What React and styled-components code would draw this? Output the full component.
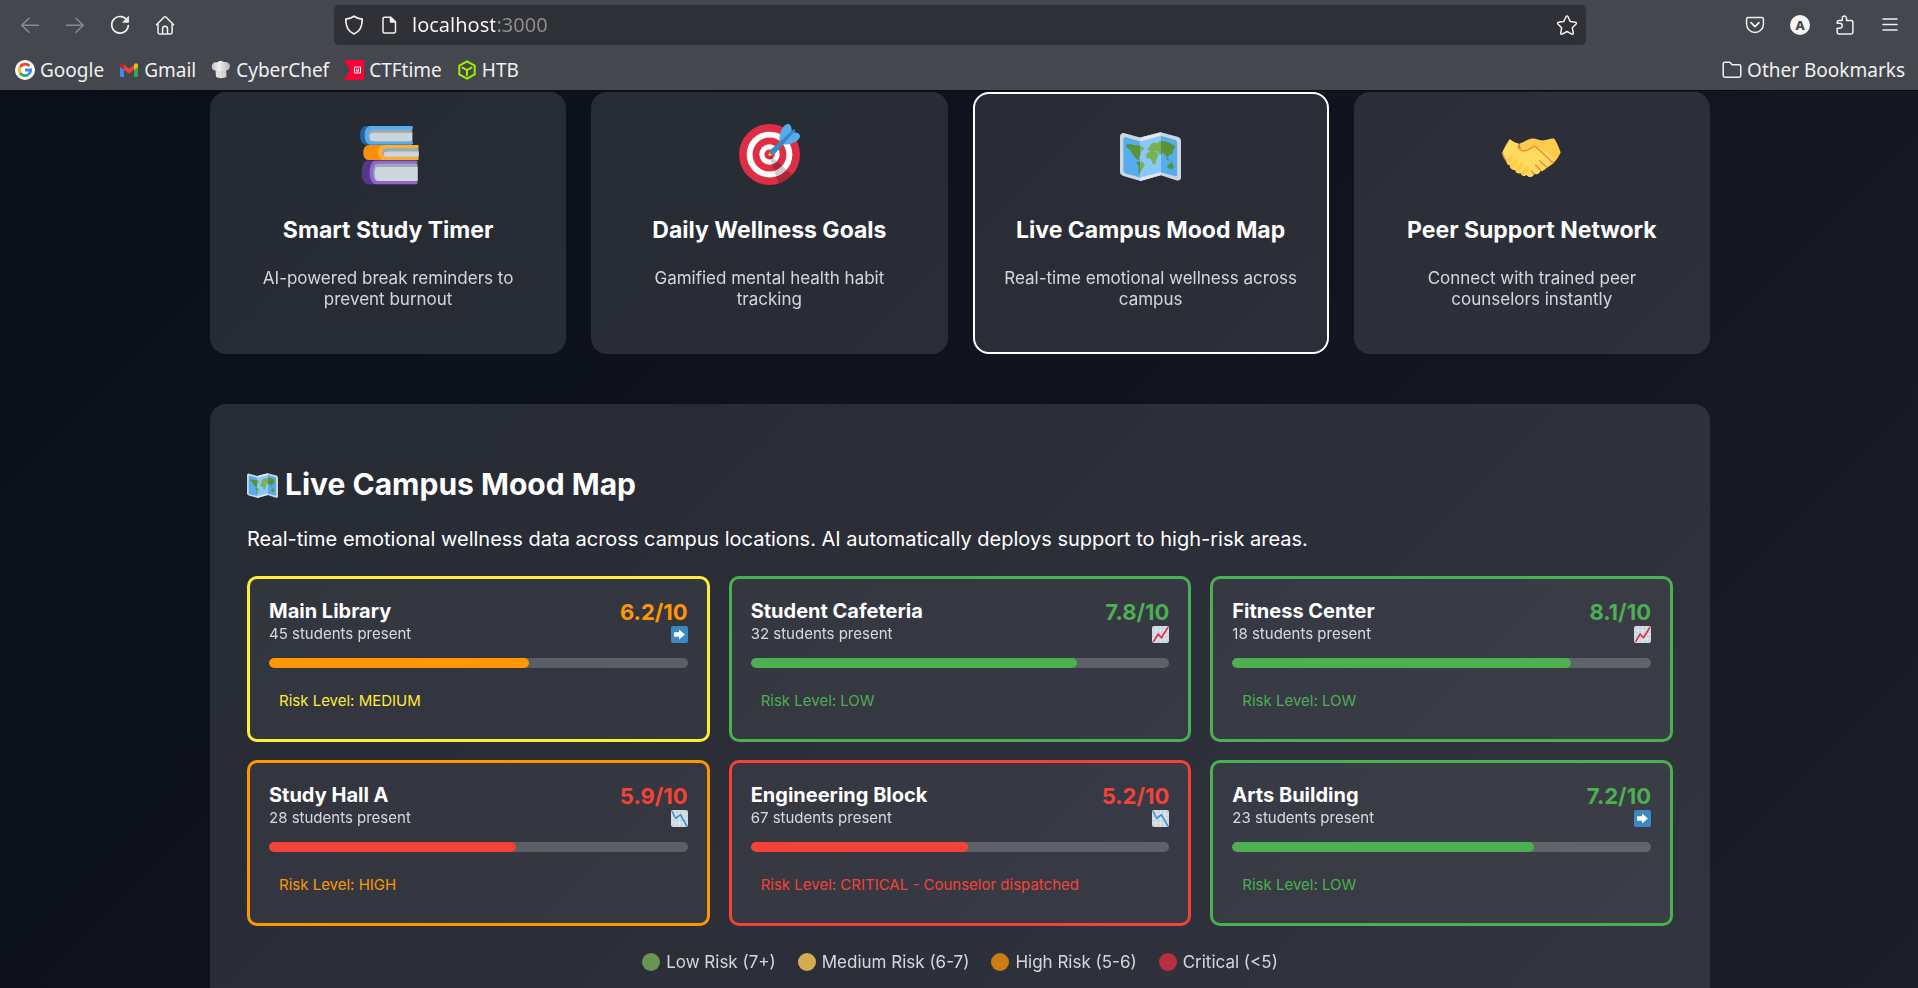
import React, { useState } from "react";
import styled, { createGlobalStyle } from "styled-components";

const GlobalStyle = createGlobalStyle`
  * { box-sizing: border-box; }
  body { margin: 0; background: #0b0e18; }
  button, input { font: inherit; color: inherit; }
`;

const Shell = styled.div`
  height: 100vh;
  display: flex;
  flex-direction: column;
  font-family: Inter, "Liberation Sans", sans-serif;
  color: #fff;
`;

/* ---------- browser chrome ---------- */

const Chrome = styled.header`
  flex: none;
  background: #45474e;
  border-bottom: 1px solid #0b0c10;
  color: #f0f0f0;
  font-family: "Noto Sans", sans-serif;
`;

const Toolbar = styled.div`
  display: flex;
  align-items: center;
  height: 50px;
  padding: 0 18px;
`;

const NavTools = styled.div`
  display: flex;
  align-items: center;
  gap: 21px;
`;

const MenuTools = styled.div`
  display: flex;
  align-items: center;
  gap: 25px;
`;

const ToolButton = styled.button`
  display: flex;
  padding: 0;
  border: 0;
  background: none;
  opacity: ${(p) => (p.disabled ? 0.4 : 1)};
`;

const UrlBar = styled.div`
  flex: 1;
  display: flex;
  align-items: center;
  height: 40px;
  margin: 0 159px 0 157px;
  padding: 0 8px;
  border-radius: 5px;
  background: #303136;
`;

const PageIcon = styled.span`
  display: flex;
  margin: 0 14px;
`;

const UrlInput = styled.input`
  flex: 1;
  min-width: 0;
  padding: 0;
  border: 0;
  outline: 0;
  font-size: 20px;
  line-height: 28px;
  color: transparent;
  caret-color: #fff;
  background: linear-gradient(to right, #fbfbfe 83px, #8d8e92 83px);
  background-clip: text;
  -webkit-background-clip: text;
`;

const Bookmarks = styled.nav`
  display: flex;
  align-items: center;
  gap: 15px;
  height: 40px;
  padding: 0 13px 0 15px;
`;

const Bookmark = styled.a`
  display: flex;
  align-items: center;
  gap: 5px;
  margin-left: ${(p) => (p.$end ? "auto" : "0")};
  color: inherit;
  text-decoration: none;
  font-size: 19px;
  line-height: 26px;
  white-space: nowrap;
`;

const Icon = ({ size = 20, box = 20, children, ...rest }) => (
  <svg width={size} height={size} viewBox={`0 0 ${box} ${box}`} fill="none" stroke="currentColor"
    strokeWidth="1.5" strokeLinecap="round" strokeLinejoin="round" aria-hidden="true" {...rest}>
    {children}
  </svg>
);

const BackIcon = () => <Icon size={24} box={24}><path d="M20.500 12.200H4M11 5.200l-7.200 7 7.200 7" /></Icon>;
const ForwardIcon = () => <Icon size={24} box={24}><path d="M3.500 12.200H20M13 5.200l7.200 7-7.200 7" /></Icon>;
const ReloadIcon = () => (
  <Icon size={24} box={24}>
    <path d="M19.400 8A8.300 8.300 0 1 0 20.300 12.600" strokeWidth="1.700" />
    <path d="M20.600 3.700v5.600H15z" fill="currentColor" strokeWidth=".8" />
  </Icon>
);
const HomeIcon = () => (
  <Icon size={24} box={24}>
    <path d="M3.500 11.800 11.200 4a1.200 1.200 0 0 1 1.700 0l7.700 7.800M5 10.800v8.400a1.800 1.800 0 0 0 1.800 1.800h10.500a1.800 1.800 0 0 0 1.800-1.800v-8.400M9.600 20.800v-5a2.400 2.400 0 0 1 4.900 0v5" />
  </Icon>
);
const ShieldIcon = () => (
  <Icon size={24} box={24}>
    <path d="M12 3.200c2.400 1.700 5 2.500 8.200 2.900.2 6.500-1.400 12-8.200 14.900-6.800-2.900-8.400-8.400-8.200-14.900C7 5.700 9.600 4.900 12 3.200z" strokeWidth="1.700" />
  </Icon>
);
const FileIcon = () => (
  <Icon size={18} box={18}>
    <path d="M4.500 1.200h6.300l4.700 4.700v9.600a1.500 1.500 0 0 1-1.500 1.500H4.500A1.500 1.500 0 0 1 3 15.500V2.700a1.500 1.500 0 0 1 1.500-1.500z" />
    <path d="M10.500 1.500V6h4.700z" fill="currentColor" />
  </Icon>
);
const StarIcon = () => (
  <Icon size={22} box={22}>
    <path d="M11 1.900c.4 0 .7.200.9.600l2.400 5.100 5.200.7c.9.100 1.200 1.100.6 1.700l-3.800 3.700 1 5.300c.1.900-.7 1.500-1.500 1.100L11 17.500l-4.800 2.600c-.8.400-1.600-.2-1.500-1.100l1-5.300L1.900 10c-.6-.6-.3-1.600.6-1.700l5.200-.7 2.400-5.100c.2-.4.500-.6.900-.6z" />
  </Icon>
);
const PocketIcon = () => (
  <Icon>
    <path d="M3 2.500h14c.8 0 1.400.6 1.400 1.400v5.400c0 4.500-3.800 8.200-8.400 8.200s-8.400-3.700-8.400-8.200V3.900c0-.8.600-1.400 1.400-1.400z" />
    <path d="M6 7.600l4 4 4-4" strokeWidth="1.700" />
  </Icon>
);
const AccountBadge = styled.span`
  display: grid;
  place-items: center;
  width: 20px;
  height: 20px;
  border-radius: 50%;
  background: #f4f4f5;
  color: #45474e;
  font-size: 13px;
  line-height: 20px;
  font-weight: 800;
`;
const PuzzleIcon = () => (
  <Icon>
    <path d="M2.200 8.300V7.100c0-1 .7-1.700 1.700-1.700h3.400V3.200a2 2 0 0 1 4.200 0v2.200h4.700c1 0 1.700.7 1.700 1.700v10.200c0 1-.7 1.700-1.700 1.700H3.900c-1 0-1.700-.7-1.700-1.700v-4.100h2.600a2.400 2.400 0 0 0 0-4.900H2.200z" />
  </Icon>
);
const MenuIcon = () => <Icon><path d="M3 4h14M3 9.500h14M3 15h14" /></Icon>;
const FolderIcon = () => (
  <Icon><path d="M2.800 2.200h4.500c.5 0 .9.200 1.200.6l1.600 1.900h7.100c1 0 1.600.7 1.600 1.600v9.200c0 1-.7 1.700-1.600 1.700H2.800c-1 0-1.600-.7-1.600-1.700V3.900c0-1 .6-1.700 1.600-1.700z" /></Icon>
);

const GoogleLogo = () => (
  <svg width="20" height="20" viewBox="0 0 20 20" aria-hidden="true">
    <circle cx="10" cy="10" r="10" fill="#fff" />
    <g fill="none" strokeWidth="2.800">
      <path d="M14.300 6A5.700 5.700 0 0 0 5.200 7" stroke="#ea4335" />
      <path d="M5.200 7a5.700 5.700 0 0 0 0 6" stroke="#fbbc05" />
      <path d="M5.200 13a5.700 5.700 0 0 0 8.500 1.300" stroke="#34a853" />
      <path d="M13.700 14.300a5.700 5.700 0 0 0 2-4.300H10" stroke="#4285f4" />
    </g>
  </svg>
);
const GmailLogo = () => (
  <svg width="20" height="20" viewBox="0 0 20 20" aria-hidden="true">
    <path d="M1 5v10.800c0 .7.500 1.200 1.200 1.200H5V8z" fill="#4285f4" />
    <path d="M19 5v10.800c0 .7-.5 1.200-1.200 1.200H15V8z" fill="#34a853" />
    <path d="M5 4.800l5 3.900 5-3.900v5L10 13.700 5 9.800z" fill="#ea4335" />
    <path d="M1 5.400C1 3.300 3.200 2.700 4.400 3.800L5 4.800v5L1 6.900z" fill="#c5221f" />
    <path d="M19 5.400c0-2.100-2.200-2.700-3.400-1.600l-.6 1v5l4-2.900z" fill="#fbbc04" />
  </svg>
);
const ChefLogo = () => (
  <svg width="20" height="20" viewBox="0 0 20 20" aria-hidden="true">
    <defs>
      <linearGradient id="chef" x1="0" x2="1">
        <stop offset="0" stopColor="#c4c4c4" /><stop offset=".4" stopColor="#f1f1f1" /><stop offset="1" stopColor="#b5b5b5" />
      </linearGradient>
    </defs>
    <path d="M4.500 10.500C1.500 10.600.3 7.600 1 5c.6-2.300 3.200-3.400 5-2.500C7.500.6 11.500.5 13 2.200c2.500-.9 5.200.4 5.800 3 .6 2.700-1 5-3.600 5.300L15.500 17c-3 1.500-7.500 1.500-10.500 0z" fill="url(#chef)" />
    <path d="M8 11v6M11 11v6" stroke="#bdbdbd" strokeWidth=".8" />
  </svg>
);
const CtfLogo = () => (
  <svg width="20" height="20" viewBox="0 0 20 20" aria-hidden="true">
    <path d="M0 0h20v20H0l6-10z" fill="#ff0033" />
    <path d="M10.500 7h6v6h-6zM12.700 8.800v2.400h1.800V8.500" fill="none" stroke="#fff" strokeWidth="1" />
  </svg>
);
const HtbLogo = () => (
  <svg width="20" height="20" viewBox="0 0 20 20" aria-hidden="true">
    <path d="M10 1.300l7.700 4.300v8.800L10 18.700l-7.700-4.300V5.600zM5.500 7.600l4.500 2.600 4.500-2.600M10 10.200v5" fill="none" stroke="#9fef00" strokeWidth="2" strokeLinejoin="round" strokeLinecap="round" />
  </svg>
);

/* ---------- emoji drawings ---------- */

const Emoji = ({ size, label, children }) => (
  <svg width={size} height={size} viewBox="0 0 36 36" role="img" aria-label={label}>{children}</svg>
);

const Books = ({ size }) => (
  <Emoji size={size} label="books">
    <path d="M8 1.200H4.600C2.500 1.200 1.200 3.600 1.200 6.700s1.300 5.500 3.400 5.500H8z" fill="#226699" />
    <path d="M31.500 1.200H7.400C5.200 1.200 3.900 3.600 3.900 6.700s1.300 5.500 3.500 5.500h24.100a1 1 0 0 0 0-2V3.200a1 1 0 0 0 0-2z" fill="#55acee" />
    <path d="M32 3.200H8.800C7.300 3.200 6.200 4.300 6.200 6.700s1.100 3.500 2.600 3.500H32z" fill="#9aaab4" />
    <path d="M32 5.200H8.800C7.600 5.200 6.800 6 6.800 7.700s.8 2.500 2 2.500H32z" fill="#ccd6dd" />
    <path d="M15 12.400H6.500c-2.100 0-3.400 1.800-3.400 4.500s1.300 4.400 3.400 4.400H15z" fill="#f4900c" />
    <path d="M35.200 12.400H15.500c-2.100 0-3.700 1.800-3.700 4.500s1.600 4.400 3.700 4.400h19.700a1 1 0 0 0 0-1.900v-5.100a1 1 0 0 0 0-1.900z" fill="#ffac33" />
    <path d="M35.800 14.300H17c-1.500 0-2.700.9-2.700 2.600s1.200 2.500 2.700 2.500h18.800z" fill="#9aaab4" />
    <path d="M35.800 16.300H17.200c-1.300 0-2 .5-2 1.600s.7 1.500 2 1.500h18.600z" fill="#ccd6dd" />
    <path d="M10 21.500H5.700c-2.100 0-3.500 3-3.500 7s1.400 7 3.500 7H10z" fill="#553788" />
    <path d="M34.500 21.500h-24c-2.100 0-3.700 3-3.700 7s1.600 7 3.700 7h24a1 1 0 0 0 0-1.900V23.400a1 1 0 0 0 0-1.900z" fill="#9266cc" />
    <path d="M35.200 23.400H11.700c-1.700 0-2.700 1.600-2.700 5.100s1 5.100 2.700 5.100h23.500z" fill="#9aaab4" />
    <path d="M35.200 25.400H11.900c-1.300 0-2 1-2 4.100s.7 4.100 2 4.100h23.300z" fill="#ccd6dd" />
  </Emoji>
);

const Target = ({ size }) => (
  <Emoji size={size} label="target">
    <circle fill="#DD2E44" cx="18" cy="18" r="18" />
    <circle fill="#FFF" cx="18" cy="18" r="13.5" />
    <circle fill="#DD2E44" cx="18" cy="18" r="10" />
    <circle fill="#FFF" cx="18" cy="18" r="6" />
    <circle fill="#DD2E44" cx="18" cy="18" r="3" />
    <path opacity=".2" d="M18.240 18.282l13.144 11.754s-2.647 3.376-7.890 5.109L17.579 18.420l.661-.138z" />
    <path fill="#FFAC33" d="M18.294 19c-.255 0-.509-.097-.704-.292-.389-.389-.389-1.018 0-1.407l.563-.563c.389-.389 1.018-.389 1.408 0 .388.389.388 1.018 0 1.407l-.564.563c-.194.195-.448.292-.703.292z" />
    <path fill="#55ACEE" d="M24.016 6.981c-.403 2.079 0 4.691 0 4.691l7.054-7.388c.291-1.454-.528-3.932-1.718-4.238-1.190-.306-4.079.803-5.336 6.935zm5.003 5.003c-2.079.403-4.691 0-4.691 0l7.388-7.054c1.454-.291 3.932.528 4.238 1.718.306 1.190-.803 4.079-6.935 5.336z" />
    <path fill="#3A87C2" d="M32.798 4.485L21.176 17.587c-.362.362-1.673.882-2.510.046-.836-.836-.419-2.080-.057-2.443L31.815 3.501s.676-.635 1.159-.152-.176 1.136-.176 1.136z" />
  </Emoji>
);

const WorldMap = ({ size }) => (
  <Emoji size={size} label="map">
    <path d="M0 7.300C0 5.800 1.300 5 2.700 5.400L12 8l12-3.200 10 2.700c1.300.4 2 1.300 2 2.500v21.600c0 1.400-1 2-2.400 1.700L24 30.300l-12 3.300-10-2.900c-1.300-.4-2-1.300-2-2.500z" fill="#ccd6dd" />
    <path d="M12 8l12-3.200v25.500l-12 3.300z" fill="#e1e8ed" />
    <path d="M2 9c0-.9.700-1.400 1.500-1.200L12 10.300v21.300L3.400 29.200C2.500 28.900 2 28.400 2 27.500zM24 7l8.400 2.300c.8.200 1.300.7 1.300 1.600v18.900c0 .9-.6 1.200-1.300 1L24 28.500z" fill="#55acee" />
    <path d="M12 10.300L24 7v21.500l-12 3.100z" fill="#88c9f9" />
    <path d="M3.600 12.200l2.600-.4 2.500.8 3.300.2v5.900l-1 .8 1 2.200-2.400-1.200L7.400 18 6 15.200l-2.200-1.300zM10.200 22.300l1.800-.2V29l-1.200-.5.300-3.600-1.300-1.500z" fill="#5c913b" />
    <path d="M12 12.800l1.500.6.700 1.400-1.500 1.200-.7 1.900zM12 22.100l1.700.4 1 1.800-1.600 2.200L12 29zM15.800 17.300l2.500-1.300 3.400.5 1.100 2-1.200 2-.8 3.200h-1.400L18.200 20.500l-2.200-.3-.8-1.200zM16.500 14.800l1.800-3 2-1 1 .7L24 9.800v8.400l-1.700-1.600-1.500-.8-1.800.6-2.200-.5z" fill="#77b255" />
    <path d="M24 9.800l4.600 1 3.900 2.200-.4 1.600-1 1 .2 1.600-2 .9-1.200 2-1.500-2-1.400-1.500-1.200 1.600zM27.500 20l1.300 1-.3.800-1.300-1zM29.500 21.800l1.500.5-.7.600zM28 24.200l2.500-1.500 1.300 2.400-.9 1.900-3-1.300z" fill="#5c913b" />
  </Emoji>
);

const Handshake = ({ size }) => (
  <Emoji size={size} label="handshake">
    <path d="M11 11.500c2.800-.8 5.300-3 8-2.900 2 .1 3.500 1.200 5.600 1.100 2.300-.1 4.500-1.400 6.700-1.100 1.500 1.900 3 5.500 3.900 8.100-.9 2.500-2.500 4.800-4.600 6.700L24 28 12 19z" fill="#ffcb4c" />
    <path d="M5.300 8.900C3.800 10.800 1.800 14.300.8 17c.5 1.800 1.300 3.400 2.500 4.900-.2 1.500.7 2.600 2.200 2.500-.2 1.700 1.100 3 2.900 2.700.1 1.600 1.600 2.500 3.200 2 .4 1.600 2.200 2 3.500 1 1.200 1.800 4 1.600 4.400-.7 1.700.8 3.600-.1 3.700-1.900 1.900.3 3.200-.9 3-2.500 1.900 0 3-1.300 2.600-2.800 2 .2 2.900-1.400 1.700-2.900L20.100 12.500c-2.100.4-3.100 2.700-5.900 3-2.600.2-4-1.300-3.100-3.700-2-.4-4-1.200-5.800-2.900z" fill="#ffdc5d" />
    <path d="M10.600 12.200c-1 2.300.8 4 3.600 3.600 2.700-.4 3.800-2.400 5.900-2.700l10.600 9.700M9.100 22.600l-3.400 2M12.200 24.700l-3.500 2.600M15.300 26.700l-3 2.600M18.200 27.800l1.200 1.600M20.500 24.400l3 3M22.800 21.700l3.600 3.300" fill="none" stroke="#ef9645" strokeWidth="1" strokeLinecap="round" strokeLinejoin="round" />
    <path d="M.8 17c.5 1.800 1.300 3.400 2.500 4.900" fill="none" stroke="#ef9645" strokeWidth=".8" />
    <g stroke="#ffcb4c" strokeWidth="2.600" strokeLinecap="round">
      <path d="M6 19.800l-1.500 2.100M9.200 21.800l-2.700 3.200M12.300 24l-2.500 3M15.200 26.200l-1.800 2.300" />
    </g>
  </Emoji>
);

const ArrowRight = ({ size }) => (
  <Emoji size={size} label="stable">
    <rect width="36" height="36" rx="4" fill="#3b88c3" />
    <path d="M29.500 18L17 7.500V13H6.500v10H17v5.500z" fill="#fff" />
  </Emoji>
);

const ChartBase = ({ size, label, color, line }) => (
  <Emoji size={size} label={label}>
    <rect width="36" height="36" rx="4" fill="#ccd6dd" />
    <path d="M0 9h36M0 18h36M0 27h36M9 0v36M18 0v36M27 0v36" stroke="#e1e8ed" strokeWidth="2" />
    <path d={line} fill="none" stroke={color} strokeWidth="3.500" strokeLinecap="round" strokeLinejoin="round" />
  </Emoji>
);
const ChartUp = ({ size }) => <ChartBase size={size} label="rising" color="#dd2e44" line="M4 32l9-15 7 8L33 4" />;
const ChartDown = ({ size }) => <ChartBase size={size} label="falling" color="#3b94d9" line="M3 4l7 14 10-8 13 23" />;

/* ---------- page ---------- */

const Page = styled.main`
  flex: 1;
  min-height: 0;
  overflow-y: auto;
  scrollbar-width: none;
  padding: 1px 0 0 2px;
  background: linear-gradient(135deg, #0a0f1a 0%, #11141f 50%, #1b1d29 100%);
`;

const Container = styled.div`
  width: 100%;
  max-width: 1500px;
  margin: 0 auto;
`;

const Features = styled.div`
  display: grid;
  grid-template-columns: repeat(4, 1fr);
  gap: 25px;
`;

const FeatureCard = styled.button`
  display: flex;
  flex-direction: column;
  align-items: center;
  padding: 30px 28px 42px;
  border: 2px solid ${(p) => (p.$active ? "#fff" : "transparent")};
  border-radius: 16px;
  background: rgba(255, 255, 255, 0.11) border-box;
  text-align: center;
  cursor: pointer;
`;

const FeatureTitle = styled.span`
  margin: 31px 0 24px;
  font-size: 23px;
  line-height: 28px;
  font-weight: 700;
`;

const FeatureText = styled.span`
  font-size: 17px;
  line-height: 21px;
  opacity: 0.8;
`;

const Panel = styled.section`
  margin-top: 50px;
  padding: 38px 37px;
  border-radius: 16px;
  background: rgba(255, 255, 255, 0.11);
`;

const PanelTitle = styled.h2`
  display: flex;
  align-items: center;
  gap: 7px;
  margin: 24px 0 25px;
  font-size: 30px;
  line-height: 36px;
`;

const PanelText = styled.p`
  margin: 0 0 25px;
  font-size: 20px;
  line-height: 24px;
`;

const Locations = styled.div`
  display: grid;
  grid-template-columns: repeat(3, 1fr);
  gap: 18px 19px;
`;

const LocationCard = styled.article`
  padding: 19px;
  border: 3px solid ${(p) => p.$color};
  border-radius: 10px;
  background: rgba(255, 255, 255, 0.05);
`;

const LocationHead = styled.div`
  display: flex;
  align-items: flex-start;
  justify-content: space-between;
  margin-bottom: 11px;
`;

const LocationName = styled.h3`
  margin: 0;
  font-size: 20px;
  line-height: 27px;
`;

const Present = styled.div`
  font-size: 15px;
  line-height: 18px;
  opacity: 0.8;
`;

const ScoreColumn = styled.div`
  display: flex;
  flex-direction: column;
  align-items: flex-end;
`;

const Score = styled.div`
  font-size: 22px;
  line-height: 28px;
  font-weight: 700;
  color: ${(p) => p.$color};
`;

const Trend = styled.div`
  display: flex;
  height: 21px;
`;

const Track = styled.div`
  height: 10px;
  border-radius: 5px;
  background: rgba(255, 255, 255, 0.2);
  overflow: hidden;
`;

const Fill = styled.div`
  height: 100%;
  border-radius: 5px;
  background: ${(p) => p.$color};
`;

const Risk = styled.div`
  margin-top: 14px;
  padding: 10px;
  font-size: 15px;
  line-height: 18px;
  color: ${(p) => p.$color};
`;

const Legend = styled.ul`
  display: flex;
  justify-content: center;
  gap: 22px;
  margin: 25px 0 0;
  padding: 0;
  list-style: none;
  font-size: 17px;
  line-height: 22px;
  opacity: 0.8;
`;

const LegendItem = styled.li`
  display: flex;
  align-items: center;
  gap: 6px;
`;

const Dot = styled.span`
  width: 18px;
  height: 18px;
  border-radius: 50%;
  background: ${(p) => p.$color};
`;

const green = "#4caf50";
const orange = "#ff9800";
const red = "#f44336";
const yellow = "#ffeb3b";

const features = [
  { Art: Books, title: "Smart Study Timer", text: "AI-powered break reminders to prevent burnout" },
  { Art: Target, title: "Daily Wellness Goals", text: "Gamified mental health habit tracking" },
  { Art: WorldMap, title: "Live Campus Mood Map", text: "Real-time emotional wellness across campus" },
  { Art: Handshake, title: "Peer Support Network", text: "Connect with trained peer counselors instantly" },
];

const locations = [
  { name: "Main Library", students: 45, score: 6.2, tone: orange, Art: ArrowRight, risk: "MEDIUM", edge: yellow },
  { name: "Student Cafeteria", students: 32, score: 7.8, tone: green, Art: ChartUp, risk: "LOW", edge: green },
  { name: "Fitness Center", students: 18, score: 8.1, tone: green, Art: ChartUp, risk: "LOW", edge: green },
  { name: "Study Hall A", students: 28, score: 5.9, tone: red, Art: ChartDown, risk: "HIGH", edge: orange },
  { name: "Engineering Block", students: 67, score: 5.2, tone: red, Art: ChartDown, risk: "CRITICAL - Counselor dispatched", edge: red },
  { name: "Arts Building", students: 23, score: 7.2, tone: green, Art: ArrowRight, risk: "LOW", edge: green },
];

const legend = [
  ["Low Risk (7+)", "#78b159"],
  ["Medium Risk (6-7)", "#fdcb58"],
  ["High Risk (5-6)", "#f4900c"],
  ["Critical (<5)", "#dd2e44"],
];

const bookmarks = [
  ["Google", GoogleLogo],
  ["Gmail", GmailLogo],
  ["CyberChef", ChefLogo],
  ["CTFtime", CtfLogo],
  ["HTB", HtbLogo],
];

function BrowserChrome() {
  return (
    <Chrome>
      <Toolbar>
        <NavTools>
          <ToolButton disabled aria-label="Back"><BackIcon /></ToolButton>
          <ToolButton disabled aria-label="Forward"><ForwardIcon /></ToolButton>
          <ToolButton aria-label="Reload"><ReloadIcon /></ToolButton>
          <ToolButton aria-label="Home"><HomeIcon /></ToolButton>
        </NavTools>
        <UrlBar>
          <ShieldIcon />
          <PageIcon><FileIcon /></PageIcon>
          <UrlInput aria-label="Address" defaultValue="localhost:3000" spellCheck={false} />
          <ToolButton aria-label="Bookmark this page"><StarIcon /></ToolButton>
        </UrlBar>
        <MenuTools>
          <ToolButton aria-label="Pocket"><PocketIcon /></ToolButton>
          <ToolButton aria-label="Account"><AccountBadge>A</AccountBadge></ToolButton>
          <ToolButton aria-label="Extensions"><PuzzleIcon /></ToolButton>
          <ToolButton aria-label="Menu"><MenuIcon /></ToolButton>
        </MenuTools>
      </Toolbar>
      <Bookmarks aria-label="Bookmarks">
        {bookmarks.map(([name, Logo]) => (
          <Bookmark key={name} href="#"><Logo />{name}</Bookmark>
        ))}
        <Bookmark href="#" $end><FolderIcon />Other Bookmarks</Bookmark>
      </Bookmarks>
    </Chrome>
  );
}

export default function App() {
  const [active, setActive] = useState(2);
  return (
    <Shell>
      <GlobalStyle />
      <BrowserChrome />
      <Page>
        <Container>
          <Features>
            {features.map(({ Art, title, text }, i) => (
              <FeatureCard key={title} $active={i === active} onClick={() => setActive(i)}>
                <Art size={61} />
                <FeatureTitle>{title}</FeatureTitle>
                <FeatureText>{text}</FeatureText>
              </FeatureCard>
            ))}
          </Features>
          <Panel>
            <PanelTitle><WorldMap size={31} />Live Campus Mood Map</PanelTitle>
            <PanelText>
              Real-time emotional wellness data across campus locations. AI automatically deploys support to high-risk areas.
            </PanelText>
            <Locations>
              {locations.map(({ name, students, score, tone, Art, risk, edge }) => (
                <LocationCard key={name} $color={edge}>
                  <LocationHead>
                    <div>
                      <LocationName>{name}</LocationName>
                      <Present>{students} students present</Present>
                    </div>
                    <ScoreColumn>
                      <Score $color={tone}>{score}/10</Score>
                      <Trend><Art size={17} /></Trend>
                    </ScoreColumn>
                  </LocationHead>
                  <Track><Fill $color={tone} style={{ width: `${score * 10}%` }} /></Track>
                  <Risk $color={edge}>Risk Level: {risk}</Risk>
                </LocationCard>
              ))}
            </Locations>
            <Legend>
              {legend.map(([label, color]) => (
                <LegendItem key={label}><Dot $color={color} />{label}</LegendItem>
              ))}
            </Legend>
          </Panel>
        </Container>
      </Page>
    </Shell>
  );
}
